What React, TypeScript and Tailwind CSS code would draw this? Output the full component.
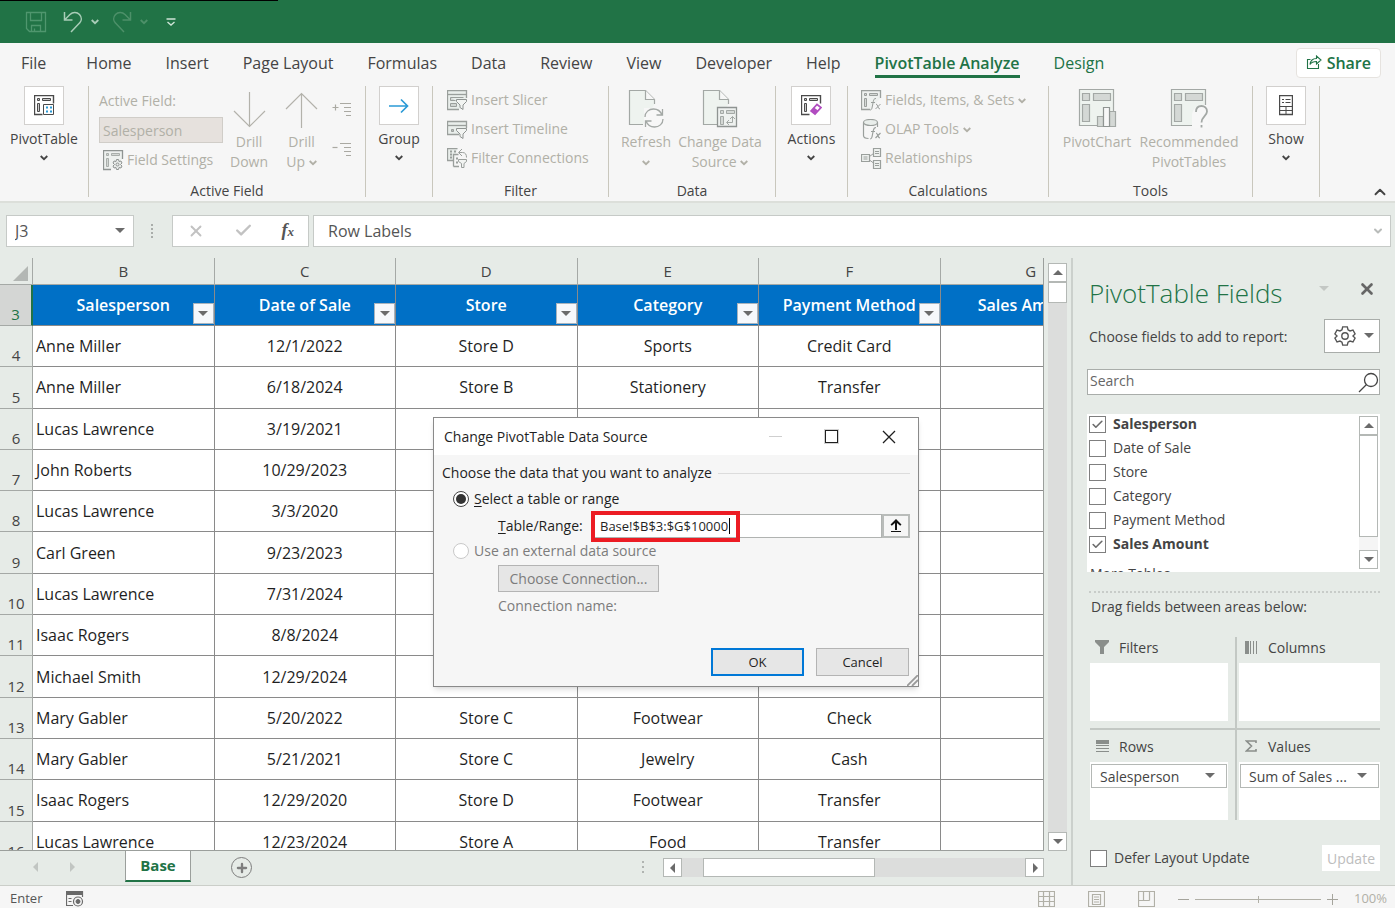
import type { ReactNode } from "react";
import { Check, ChevronDown, ChevronUp, Plus, X } from "lucide-react";

const TABS = [
  "File",
  "Home",
  "Insert",
  "Page Layout",
  "Formulas",
  "Data",
  "Review",
  "View",
  "Developer",
  "Help",
  "PivotTable Analyze",
  "Design",
];

const COLUMNS = [
  { letter: "B", title: "Salesperson" },
  { letter: "C", title: "Date of Sale" },
  { letter: "D", title: "Store" },
  { letter: "E", title: "Category" },
  { letter: "F", title: "Payment Method" },
  { letter: "G", title: "Sales Amount" },
];

const ROWS = [
  ["Anne Miller", "12/1/2022", "Store D", "Sports", "Credit Card"],
  ["Anne Miller", "6/18/2024", "Store B", "Stationery", "Transfer"],
  ["Lucas Lawrence", "3/19/2021", "", "", ""],
  ["John Roberts", "10/29/2023", "", "", ""],
  ["Lucas Lawrence", "3/3/2020", "", "", ""],
  ["Carl Green", "9/23/2023", "", "", ""],
  ["Lucas Lawrence", "7/31/2024", "", "", ""],
  ["Isaac Rogers", "8/8/2024", "", "", ""],
  ["Michael Smith", "12/29/2024", "", "", ""],
  ["Mary Gabler", "5/20/2022", "Store C", "Footwear", "Check"],
  ["Mary Gabler", "5/21/2021", "Store C", "Jewelry", "Cash"],
  ["Isaac Rogers", "12/29/2020", "Store D", "Footwear", "Transfer"],
  ["Lucas Lawrence", "12/23/2024", "Store A", "Food", "Transfer"],
];

const FIELDS = [
  { name: "Salesperson", checked: true },
  { name: "Date of Sale", checked: false },
  { name: "Store", checked: false },
  { name: "Category", checked: false },
  { name: "Payment Method", checked: false },
  { name: "Sales Amount", checked: true },
];

/* ---------- small shared pieces ---------- */

function Triangle({ dir = "down", className = "text-[#6b6b6b]" }: { dir?: "up" | "down" | "left" | "right"; className?: string }) {
  const paths = {
    down: "M0 2h10L5 7z",
    up: "M0 7h10L5 2z",
    left: "M7 0v10L2 5z",
    right: "M3 0v10l5-5z",
  };
  return (
    <svg width="10" height="10" viewBox="0 0 10 10" className={`shrink-0 ${className}`} fill="currentColor">
      <path d={paths[dir]} />
    </svg>
  );
}

function Caret() {
  return (
    <svg width="8" height="6" viewBox="0 0 8 6" fill="none" stroke="currentColor" strokeWidth="1.800" className="inline-block align-middle">
      <path d="M.700 1L4 4.200 7.300 1" />
    </svg>
  );
}

function ScrollButton({ dir, label }: { dir: "up" | "down" | "left" | "right"; label: string }) {
  return (
    <button aria-label={label} className="flex items-center justify-center w-[19px] h-[19px] shrink-0 bg-white border border-[#b4b8b5]">
      <Triangle dir={dir} />
    </button>
  );
}

/* ---------- ribbon icons ---------- */

function SaveIcon() {
  return (
    <svg width="22" height="22" viewBox="0 0 22 22" fill="none" stroke="#4f966e" strokeWidth="1.3">
      <path d="M1.5 1.5h19v19h-16l-3-3zM5.500 1.500v8h11v-8M6.500 20.500v-6h9v6M9.500 20.500v-3" />
    </svg>
  );
}

function UndoIcon({ flip = false }: { flip?: boolean }) {
  return (
    <svg width="20" height="22" viewBox="0 0 20 22" fill="none" stroke="currentColor" strokeWidth="1.5" className={flip ? "-scale-x-100" : ""}>
      <path d="M1.500 1v8h8M1.500 9l5.500-5.500c3-3 7-2.500 9.500 0 2.500 2.800 2.300 6.300 0 8.600L8 21" />
    </svg>
  );
}

function PivotIcon({ children, color = "#4a4a4a" }: { children?: ReactNode; color?: string }) {
  return (
    <svg width="21" height="21" viewBox="0 0 21 21" fill="none" stroke={color}>
      <path d="M8.500 19.500h-8v-19h19v8" strokeWidth="1.4" />
      <path d="M3.500 3.500h2v2h-2zM8.500 3.500h8v2h-8zM3.500 8.500h2v8h-2z" fill="#c9c9c9" />
      {children}
    </svg>
  );
}

function GearIcon() {
  return (
    <svg width="22" height="22" viewBox="0 0 24 24" fill="none" stroke="#555555" strokeWidth="1.500">
      <path d="M9.500 2h5l.8 3.200 2.200 1.300 3.200-1 2.300 4.200L20.700 12l2.300 2.300-2.300 4.200-3.200-1-2.200 1.300-.8 3.200h-5l-.8-3.200-2.200-1.300-3.200 1L1 14.300 3.300 12 1 9.700l2.300-4.200 3.200 1 2.200-1.300z" />
      <circle cx="12" cy="12" r="3.500" />
    </svg>
  );
}

function FieldSettingsIcon() {
  return (
    <svg width="21" height="21" viewBox="0 0 21 21" fill="none" stroke="#8f9492">
      <path d="M8 19.500H.500V.500h19V9" fill="#eef1ef" strokeWidth="1.3" />
      <path d="M3.500 3.500h2v2h-2zM8.500 3.500h8v2h-8zM3.500 8.500h2v8h-2z" fill="#d4d8d5" stroke="#a9aeab" />
      <path d="M13.500 9.500h2l.5 2 2-.5 1 2-1.500 1.500 1.500 1.500-1 2-2-.5-.5 2h-2l-.5-2-2 .5-1-2 1.500-1.500L10 13l1-2 2 .5z" fill="#e9ecea" />
      <circle cx="14.500" cy="14.500" r="1.500" />
    </svg>
  );
}

function FunnelOverlay() {
  return <path d="M9.500 9.500h10v2l-3.500 3.500v4.500l-3-2V15L9.500 11.500z" fill="#f2f4f2" stroke="#8f9492" />;
}

function SlicerIcon() {
  return (
    <svg width="21" height="21" viewBox="0 0 21 21" fill="none" stroke="#9a9f9c">
      <path d="M12 19.500H.500V.500h19V8" fill="#e9eeeb" strokeWidth="1.300" />
      <path d="M1 4.500h18" strokeWidth="1.300" />
      <path d="M3.500 7.500h13M3.500 7.500v3h5M3.500 13.500h6v3h-6z" fill="#d0d5d2" />
      <FunnelOverlay />
    </svg>
  );
}

function TimelineIcon() {
  return (
    <svg width="21" height="19" viewBox="0 1 21 19" fill="none" stroke="#9a9f9c">
      <path d="M12 15.500H.500V2.500h19V9" fill="#e9eeeb" strokeWidth="1.300" />
      <path d="M1 6.500h18" strokeWidth="1.300" />
      <path d="M4.500 10.500h2v2h-2z" fill="#b9bebb" />
      <FunnelOverlay />
    </svg>
  );
}

function FilterConnectionsIcon() {
  return (
    <svg width="21" height="21" viewBox="0 0 21 21" fill="none" stroke="#9a9f9c">
      <path d="M7 12.500H.500V.500h10" fill="#e9eeeb" strokeWidth="1.300" />
      <path d="M3 3.500h2M7 3.500h2M3 6.500h2M3 9.500h2" strokeWidth="2" />
      <path d="M6.500 18.500v-12h5M12 18.500H6.500" strokeWidth="1.300" />
      <path d="M9 10.500h2M9 14.500h2" strokeWidth="2" />
      <path d="M12 4.500h3.500c3 0 4 2 4 5M15 1l-3.500 3.500L15 8" />
      <path d="M11.500 11.500h8v2l-2.500 2v4h-2.500v-4l-3-2z" fill="#f2f4f2" />
    </svg>
  );
}

function PageShape() {
  return (
    <>
      <path d="M27.500 16v-4.500l-9-9h-16v34H16" fill="#eef3ef" stroke="#a3a8a5" strokeWidth="1.200" />
      <path d="M18.500 2.500v9h9" fill="#f7f7f7" stroke="#a3a8a5" strokeWidth="1.200" />
    </>
  );
}

function RefreshIcon() {
  return (
    <svg width="38" height="40" viewBox="0 0 38 40" fill="none" stroke="#a3a8a5" strokeWidth="1.300">
      <PageShape />
      <rect x="17" y="20" width="20" height="20" fill="#f7f7f7" stroke="none" />
      <path d="M18 29c0-5 4-8 8.500-8 4 0 7 2 8.500 6M35.500 21v6h-6M36 31c0 5-4 8-8.500 8-4 0-7-2-8.500-6M18.500 39v-6h6" />
    </svg>
  );
}

function ChangeSourceIcon() {
  return (
    <svg width="38" height="40" viewBox="0 0 38 40" fill="none" stroke="#a3a8a5" strokeWidth="1.300">
      <PageShape />
      <path d="M16.500 19.500h19v19h-19z" fill="#eef1ef" stroke="#8f9492" />
      <path d="M19.500 22.500h3v3h-3zM25.500 22.500h8v3h-8zM19.500 28.500h3v8h-3z" fill="#d4d8d5" strokeWidth="1" />
      <path d="M26 34.500h5.500v-6M28 32l-2.500 2.500L28 37M29 31l2.500-2.500L34 31" strokeWidth="1" />
    </svg>
  );
}

function BigPivot({ children }: { children: ReactNode }) {
  return (
    <svg width="40" height="40" viewBox="0 0 40 40" fill="none" stroke="#a3a8a5" strokeWidth="1.200">
      <path d="M2.500 1.500h34v36h-34z" fill="#eef3ef" />
      <path d="M5.500 5.500h7v7h-7zM16.500 5.500h17v7h-17zM5.500 16.500h7v17h-7z" fill="#d4d8d5" />
      {children}
    </svg>
  );
}

function FxTableIcon() {
  return (
    <svg width="21" height="21" viewBox="0 0 21 21" fill="none" stroke="#9a9f9c">
      <path d="M9 19.500H.500V.500h19V8" fill="#eef1ef" strokeWidth="1.300" />
      <path d="M3.500 3.500h2v2h-2zM8.500 3.500h8v2h-8zM3.500 8.500h2v8h-2z" fill="#d4d8d5" />
      <path d="M15 8.500c-2 0-2.300 1-2.700 3L11 18c-.3 1.500-1 2-2 2M10 12.500h4M15 14c2 0 1.500 5 4 5M19.500 14l-5 5" />
    </svg>
  );
}

function OlapIcon() {
  return (
    <svg width="21" height="21" viewBox="0 0 21 21" fill="none" stroke="#9a9f9c" strokeWidth="1.200">
      <path d="M2.500 3.500v13c0 2 2 3 5 3M16.500 3.500V8" />
      <ellipse cx="9.500" cy="3.500" rx="7" ry="3" fill="#e9eeeb" />
      <path d="M15 8.500c-2 0-2.300 1-2.700 3L11 18c-.3 1.500-1 2-2 2M10 12.500h4M15 14c2 0 1.500 5 4 5M19.500 14l-5 5" />
    </svg>
  );
}

function RelationshipsIcon() {
  return (
    <svg width="21" height="21" viewBox="0 0 21 21" fill="none" stroke="#9a9f9c" strokeWidth="1.200">
      <path d="M.500 6.500h8v7h-8zM12.500.500h7v8h-7zM12.500 12.500h7v8h-7z" fill="#eef1ef" />
      <path d="M2.500 9h4M2.500 11h4M14 3.500h4M14 5.500h4M14 15.500h4M14 17.500h4M8.500 8.500l4-3M8.500 12l4 3" strokeWidth="1" />
    </svg>
  );
}

function ExpandIcon({ plus = false }: { plus?: boolean }) {
  return (
    <svg width="20" height="16" viewBox="0 0 20 16" fill="none" stroke="#aaa9a2" strokeWidth="1.200">
      <path d={plus ? "M.500 5.500h6M3.500 2.500v6" : "M.500 5.500h5"} />
      <path d="M8 1.500h11M12 5.500h7M12 9.500h7M14 13.500h5" />
    </svg>
  );
}

function DrillArrow({ up = false }: { up?: boolean }) {
  return (
    <svg width="33" height="36" viewBox="0 0 33 36" fill="none" stroke="#b3b2ab" strokeWidth="1.200" className={up ? "rotate-180" : ""}>
      <path d="M16.500 0v34.500M1 19l15.500 15.500L32 19" />
    </svg>
  );
}

/* ---------- ribbon ---------- */

function RibbonGroup({ label, className, children }: { label?: string; className: string; children: ReactNode }) {
  return (
    <section className={`flex flex-col shrink-0 h-[111px] border-r border-[#c9c7bd] ${className}`}>
      <div className="flex flex-1 justify-center">{children}</div>
      {label && <h2 className="text-center text-[14px] leading-3 text-[#444444]">{label}</h2>}
    </section>
  );
}

function BoxedButton({ label, children }: { label: string; children: ReactNode }) {
  return (
    <button className="flex flex-col items-center text-[#444444]">
      <span className="flex items-center justify-center w-10 h-[39px] bg-white border border-[#d2d0ce]">{children}</span>
      <span className="mt-1 leading-5">{label}</span>
      <span className="leading-4">
        <Caret />
      </span>
    </button>
  );
}

function SmallCommand({ icon, label, caret = false }: { icon: ReactNode; label: string; caret?: boolean }) {
  return (
    <button disabled className="flex items-center gap-[3px] h-7 whitespace-nowrap leading-5 text-[#b1b0a7]">
      <span className="flex justify-center w-[21px]">{icon}</span>
      <span>
        {label} {caret && <Caret />}
      </span>
    </button>
  );
}

function BigCommand({ icon, lines, caret = false, className = "" }: { icon: ReactNode; lines: string[]; caret?: boolean; className?: string }) {
  return (
    <button disabled className={`flex flex-col items-center whitespace-nowrap text-[#b1b0a7] ${className}`}>
      <span className="flex items-end h-[42px] mb-1">{icon}</span>
      {lines.map((line, i) => (
        <span key={i} className="h-5 leading-5">
          {line} {caret && i === lines.length - 1 && <Caret />}
        </span>
      ))}
    </button>
  );
}

function Ribbon() {
  return (
    <div className="relative flex h-[117px] text-[14px] bg-[#f6f6f6] border-b-2 border-[#dcdfda]">
      <RibbonGroup className="w-[89px]">
        <BoxedButton label="PivotTable">
          <PivotIcon>
            <path d="M9.500 9.500h10v10h-10z" fill="#fff" />
            <path d="M12 12.500h2M16 12.500h2M12 16.500h2M16 16.500h2" stroke="#2b9ad6" strokeWidth="2" />
          </PivotIcon>
        </BoxedButton>
      </RibbonGroup>

      <RibbonGroup label="Active Field" className="w-[277px]">
        <div className="flex flex-1 pl-[10px] text-[#b1b0a7]">
          <div className="flex flex-col w-[124px]">
            <label htmlFor="active-field" className="mt-1 h-[27px] leading-[22px]">
              Active Field:
            </label>
            <input
              id="active-field"
              disabled
              defaultValue="Salesperson"
              className="w-full h-[26px] px-[3px] bg-[#e6e1dd] border border-[#d0cdc8]"
            />
            <button disabled className="flex items-center gap-[3px] mt-[6px] pl-1 leading-[22px] whitespace-nowrap">
              <FieldSettingsIcon />
              Field Settings
            </button>
          </div>
          <BigCommand className="w-[52px]" icon={<DrillArrow />} lines={["Drill", "Down"]} />
          <BigCommand className="w-[53px]" icon={<DrillArrow up />} lines={["Drill", "Up"]} caret />
          <div className="flex flex-col gap-6 pt-4 pl-1">
            <button disabled aria-label="Expand Field">
              <ExpandIcon plus />
            </button>
            <button disabled aria-label="Collapse Field">
              <ExpandIcon />
            </button>
          </div>
        </div>
      </RibbonGroup>

      <RibbonGroup className="w-[67px]">
        <BoxedButton label="Group">
          <svg width="20" height="16" viewBox="0 0 20 16" fill="none" stroke="#2b9ad6" strokeWidth="1.700">
            <path d="M0 8h18.500M12 1.500L18.500 8 12 14.500" />
          </svg>
        </BoxedButton>
      </RibbonGroup>

      <RibbonGroup label="Filter" className="w-[176px]">
        <div className="flex flex-1 flex-col items-start gap-px pl-[14px]">
          <SmallCommand icon={<SlicerIcon />} label="Insert Slicer" />
          <SmallCommand icon={<TimelineIcon />} label="Insert Timeline" />
          <SmallCommand icon={<FilterConnectionsIcon />} label="Filter Connections" />
        </div>
      </RibbonGroup>

      <RibbonGroup label="Data" className="w-[167px]">
        <div className="flex flex-1">
          <BigCommand className="w-[74px]" icon={<RefreshIcon />} lines={["Refresh", ""]} caret />
          <BigCommand className="w-[74px]" icon={<ChangeSourceIcon />} lines={["Change Data", "Source"]} caret />
        </div>
      </RibbonGroup>

      <RibbonGroup className="w-[72px]">
        <BoxedButton label="Actions">
          <PivotIcon>
            <path d="M10 16l6-6.500 4 3-6 6.500z" fill="#fff" stroke="#b14cc0" strokeWidth="1.700" />
            <path d="M10 16l3-3.500 4 3-3 3.500z" fill="#b14cc0" stroke="none" />
          </PivotIcon>
        </BoxedButton>
      </RibbonGroup>

      <RibbonGroup label="Calculations" className="w-[201px]">
        <div className="flex flex-1 flex-col items-start gap-px pl-[13px]">
          <SmallCommand icon={<FxTableIcon />} label="Fields, Items, & Sets" caret />
          <SmallCommand icon={<OlapIcon />} label="OLAP Tools" caret />
          <SmallCommand icon={<RelationshipsIcon />} label="Relationships" />
        </div>
      </RibbonGroup>

      <RibbonGroup label="Tools" className="w-[204px]">
        <div className="flex flex-1 pl-[2px]">
          <BigCommand
            className="w-[92px]"
            icon={
              <BigPivot>
                <path d="M20.500 28.500h6v10h-6zM32.500 23.500h6v15h-6z" fill="#d4d8d5" />
                <path d="M26.500 19.500h6v19h-6z" fill="#f7f7f7" stroke="#8f9492" />
              </BigPivot>
            }
            lines={["PivotChart"]}
          />
          <BigCommand
            className="w-[92px]"
            icon={
              <BigPivot>
                <path d="M23 40V26c2-7 6-9 10-9h6v23z" fill="#f7f7f7" stroke="none" />
                <path d="M27 24c0-4 2.500-6 5.500-6s5.500 2 5.500 5.500c0 4.500-5.500 5-5.500 11M32.500 37v2.500" strokeWidth="1.800" />
              </BigPivot>
            }
            lines={["Recommended", "PivotTables"]}
          />
        </div>
      </RibbonGroup>

      <RibbonGroup className="w-[67px]">
        <BoxedButton label="Show">
          <svg width="14" height="21" viewBox="0 0 14 21" fill="none" stroke="#4a4a4a">
            <path d="M.500.500h13v19H.500z" strokeWidth="1.400" />
            <path d="M3 4.500h2M6.500 4.500h5M3 7.500h2M6.500 7.500h5M1 11.500h12M1 15.500h12M7 11.500v8" />
          </svg>
        </BoxedButton>
      </RibbonGroup>

      <button aria-label="Collapse the Ribbon" className="absolute right-[6px] bottom-0 text-[#444444]">
        <ChevronUp className="w-[18px] h-[18px]" strokeWidth={2.500} />
      </button>
    </div>
  );
}

function Header() {
  return (
    <header>
      <div className="h-[43px] bg-[#217346]">
        <div className="h-px w-[278px] bg-black" />
        <div className="flex items-center pl-[25px] h-[42px] text-[#a9cdb8]">
          <button disabled aria-label="Save">
            <SaveIcon />
          </button>
          <button aria-label="Undo" className="flex items-center gap-2 ml-4">
            <UndoIcon />
            <Caret />
          </button>
          <button disabled aria-label="Redo" className="flex items-center gap-2 ml-[13px] text-[#4d9069]">
            <UndoIcon flip />
            <Caret />
          </button>
          <button aria-label="Customize Quick Access Toolbar" className="ml-[18px]">
            <svg width="10" height="9" viewBox="0 0 10 9" fill="none" stroke="#cfe4d7" strokeWidth="1.400">
              <path d="M.500 1h9M1.500 4l3.500 3 3.500-3" />
            </svg>
          </button>
        </div>
      </div>
      <nav className="flex items-center h-[43px] pb-1 pl-[21px] pr-[14px] bg-[#f6f6f6] text-[16px] text-[#444444]">
        <div className="flex flex-1 items-center gap-[34px]">
          {TABS.map((tab) => {
            if (tab === "PivotTable Analyze") {
              return (
                <button key={tab} className="leading-6 font-semibold text-[#217346] border-y-[3px] border-t-transparent border-b-[#217346] whitespace-nowrap">
                  {tab}
                </button>
              );
            }
            return (
              <button key={tab} className={`leading-6 whitespace-nowrap ${tab === "Design" ? "text-[#217346]" : ""} ${tab === "File" ? "mr-[6px]" : ""}`}>
                {tab}
              </button>
            );
          })}
        </div>
        <button className="flex items-center gap-[5px] h-[30px] px-[9px] rounded-sm bg-white border border-[#e6e3df] font-semibold text-[#217346]">
          <svg width="16" height="15" viewBox="0 0 16 15" fill="none" stroke="currentColor" strokeWidth="1.100">
            <path d="M4.500 4.500h-3v9h11V9M4 9.500c.5-4 3-6 6.500-6V1L15 5l-4.500 4V6.500C8 6.500 5.500 7 4 9.500z" />
          </svg>
          Share
        </button>
      </nav>
      <Ribbon />
    </header>
  );
}

/* ---------- formula bar ---------- */

function FormulaBar() {
  return (
    <div className="flex items-center h-[55px] pl-[6px] pr-1 text-[16px] text-[#555555]">
      <div className="flex items-center w-32 h-8 pr-2 bg-white border border-[#c6cac7]">
        <input aria-label="Name Box" defaultValue="J3" className="flex-1 min-w-0 h-full pl-2 outline-none" />
        <button aria-label="Name Box list">
          <Triangle />
        </button>
      </div>
      <svg width="3" height="14" viewBox="0 0 3 14" fill="#a9adaa" className="ml-[17px] mr-[18px]">
        <path d="M0 0h2v2H0zM0 4h2v2H0zM0 8h2v2H0zM0 12h2v2H0z" />
      </svg>
      <div className="flex items-center justify-between w-[137px] h-8 px-[14px] bg-white border border-[#c6cac7]">
        <button aria-label="Cancel entry" className="text-[#c2c2c2]">
          <X className="w-[18px] h-[18px]" strokeWidth={2.500} />
        </button>
        <button aria-label="Enter entry" className="text-[#c2c2c2]">
          <Check className="w-[19px] h-[19px]" strokeWidth={3} />
        </button>
        <button aria-label="Insert Function" className="font-['Liberation_Serif',serif] italic font-bold text-[18px] leading-5">
          f<span className="text-[13px]">x</span>
        </button>
      </div>
      <div className="flex items-center flex-1 h-8 ml-1 pr-[6px] bg-white border border-[#c6cac7]">
        <input aria-label="Formula Bar" defaultValue="Row Labels" className="flex-1 h-full pl-[14px] outline-none" />
        <button aria-label="Expand Formula Bar" className="text-[#b9bcba]">
          <ChevronDown className="w-3 h-3" strokeWidth={4} />
        </button>
      </div>
    </div>
  );
}

/* ---------- worksheet ---------- */

function SheetGrid() {
  return (
    <div className="flex-1 min-h-0 overflow-hidden border-r border-b border-[#9b9f9c]">
      <table className="table-fixed w-[1122px] h-[605px] border-separate border-spacing-0 text-[16px] text-[#1f1f1f]">
        <colgroup>
          <col className="w-[33px]" />
        </colgroup>
        <thead className="bg-[#e6ebe7]">
          <tr className="h-[27px]">
            <th className="border-r border-b border-[#a5a9a6] p-0">
              <svg width="15" height="15" viewBox="0 0 15 15" className="ml-[13px] mt-1" fill="#b3b7b4">
                <path d="M15 0v15H0z" />
              </svg>
            </th>
            {COLUMNS.map((col) => (
              <th key={col.letter} className="p-0 border-r border-b border-[#a5a9a6] text-[15px] leading-6 font-normal text-[#444444]">
                {col.letter}
              </th>
            ))}
          </tr>
        </thead>
        <tbody>
          <tr className="h-[41px]">
            <th className="p-0 border-r-2 border-b border-r-[#217346] border-b-[#a5a9a6] bg-[#d4d6d4] align-bottom text-[15px] leading-[22px] font-normal text-[#217346]">
              3
            </th>
            {COLUMNS.map((col) => (
              <td key={col.letter} className="relative p-0 bg-[#0070c6] border-r border-b border-[#8a8a8a] text-center font-semibold text-white whitespace-nowrap">
                {col.title}
                <button
                  aria-label={`Filter ${col.title}`}
                  className="absolute right-0 bottom-px flex items-center justify-center w-[21px] h-[21px] bg-[#f6f8fb] border border-[#a8b3bd]"
                >
                  <Triangle />
                </button>
              </td>
            ))}
          </tr>
          {ROWS.map((row, i) => (
            <tr key={i} className="bg-white">
              <th className="p-0 bg-[#e6ebe7] border-r border-b border-[#a5a9a6] align-bottom text-[15px] leading-[22px] font-normal text-[#444444]">
                {i + 4}
              </th>
              {row.map((value, j) => (
                <td key={j} className={`p-0 border-r border-b border-[#8a8a8a] whitespace-nowrap ${j === 0 ? "pl-[3px]" : "text-center"}`}>
                  {value}
                </td>
              ))}
              <td className="border-r border-b border-[#8a8a8a]" />
            </tr>
          ))}
        </tbody>
      </table>
    </div>
  );
}

function SheetTabs() {
  return (
    <div className="flex items-start h-[34px]">
      <div className="flex gap-[26px] w-[125px] pt-[11px] pl-[31px]">
        <button aria-label="Previous sheet">
          <Triangle dir="left" className="text-[#c1c5c2]" />
        </button>
        <button aria-label="Next sheet">
          <Triangle dir="right" className="text-[#c1c5c2]" />
        </button>
      </div>
      <button className="w-[66px] h-[31px] bg-white border-x border-b-2 border-x-[#9b9f9c] border-b-[#217346] text-[15px] font-bold text-[#217346]">
        Base
      </button>
      <button aria-label="New sheet" className="flex items-center justify-center w-[21px] h-[21px] mt-[6px] ml-10 rounded-full border border-[#7d7d7d] text-[#7d7d7d]">
        <Plus className="w-[14px] h-[14px]" strokeWidth={4} />
      </button>
      <div className="flex flex-1 items-center justify-end pt-[7px]">
        <svg width="2" height="14" viewBox="0 0 2 14" fill="#b0b4b1" className="mr-[19px]">
          <path d="M0 0h2v2H0zM0 5h2v2H0zM0 10h2v2H0z" />
        </svg>
        <ScrollButton dir="left" label="Scroll left" />
        <div className="w-[343px] h-[19px] pl-[21px] bg-[#dcdddc]">
          <div className="w-[172px] h-full bg-white border border-[#b4b8b5]" />
        </div>
        <ScrollButton dir="right" label="Scroll right" />
      </div>
    </div>
  );
}

/* ---------- PivotTable Fields pane ---------- */

function CheckBox({ label, checked = false, bold = false }: { label: string; checked?: boolean; bold?: boolean }) {
  return (
    <label className={`flex items-center gap-[7px] text-[14px] leading-6 text-[#444444] ${bold ? "font-bold" : ""}`}>
      <span className="grid">
        <input type="checkbox" defaultChecked={checked} className="peer [grid-area:1/1] appearance-none w-[17px] h-[17px] bg-white border border-[#7f7f7f]" />
        <Check className="hidden peer-checked:block pointer-events-none [grid-area:1/1] place-self-center w-[13px] h-[13px] text-[#6b6b6b]" strokeWidth={3} />
      </span>
      {label}
    </label>
  );
}

function Area({ title, icon, item }: { title: string; icon: ReactNode; item?: string }) {
  return (
    <section>
      <h3 className="flex items-start gap-[10px] h-[26px] pl-[5px] leading-[22px]">
        <span className="flex items-center justify-center w-[14px] h-5">{icon}</span>
        {title}
      </h3>
      <div className="h-[58px] px-[1px] pt-[2px] bg-white">
        {item && (
          <button className="flex items-center justify-between w-full h-6 pl-2 pr-[11px] border border-[#b4b8b5] bg-white whitespace-nowrap">
            {item}
            <Triangle />
          </button>
        )}
      </div>
    </section>
  );
}

function FieldsPane() {
  return (
    <aside className="flex flex-col shrink-0 w-[324px] pt-3 pl-[14px] pr-[15px] border-l-2 border-[#cbd0cc] text-[14px] text-[#444444]">
      <div className="flex items-center h-[46px] pl-[2px]">
        <h2 className="flex-1 text-[26px] leading-8 font-light text-[#217346] whitespace-nowrap">PivotTable Fields</h2>
        <button aria-label="Task Pane Options" className="mb-2 mr-[29px]">
          <Triangle className="text-[#c3c7c4]" />
        </button>
        <button aria-label="Close" className="mb-2 mr-1">
          <X className="w-[18px] h-[18px] text-[#666666]" strokeWidth={3.500} />
        </button>
      </div>
      <div className="flex items-center justify-between mt-[3px] pl-[2px] h-[34px]">
        Choose fields to add to report:
        <button aria-label="Tools" className="flex items-center gap-2 h-[34px] pl-[9px] pr-[5px] bg-white border border-[#a9adaa]">
          <GearIcon />
          <Triangle />
        </button>
      </div>
      <div className="flex items-center h-[26px] mt-4 bg-white border border-[#a9adaa]">
        <input aria-label="Search fields" placeholder="Search" className="flex-1 min-w-0 pb-[3px] pl-[2px] leading-5 outline-none placeholder:text-[#666666]" />
        <svg width="21" height="21" viewBox="0 0 21 21" fill="none" stroke="#444444" strokeWidth="1.300">
          <circle cx="13" cy="8" r="6.500" />
          <path d="M8.500 12.500L1 20" />
        </svg>
      </div>

      <div className="flex h-[158px] mt-[19px] bg-white overflow-hidden">
        <div className="flex-1 pl-[2px] -mt-[2px]">
          {FIELDS.map((field) => (
            <CheckBox key={field.name} label={field.name} checked={field.checked} bold={field.checked} />
          ))}
          <p className="pt-2 pl-[1px] leading-5">More Tables...</p>
        </div>
        <div className="flex flex-col w-[21px] pt-[2px] pb-[3px] pr-[2px]">
          <ScrollButton dir="up" label="Scroll fields up" />
          <div className="h-[102px] bg-white border border-[#b4b8b5]" />
          <div className="flex-1 bg-[#f5f5f5]" />
          <ScrollButton dir="down" label="Scroll fields down" />
        </div>
      </div>

      <p className="mt-[19px] ml-[2px] pt-1 pl-[2px] border-t-2 border-dotted border-[#c8ccc9] leading-5">Drag fields between areas below:</p>

      <div className="grid grid-cols-[145px_1fr] mt-5 ml-[3px]">
        <div className="pb-[7px] pr-[7px] border-b-2 border-[#c3c8c4]">
          <Area
            title="Filters"
            icon={
              <svg width="14" height="14" viewBox="0 0 14 14" fill="#8a8e8b">
                <path d="M0 0h14v2L9 7v7H5V7L0 2z" />
              </svg>
            }
          />
        </div>
        <div className="pb-[7px] pl-[2px] border-l-2 border-b-2 border-[#c3c8c4]">
          <Area
            title="Columns"
            icon={
              <svg width="12" height="13" viewBox="0 0 12 13" fill="#8a8e8b">
                <path d="M0 0h4v13H0zM5 0h1v13H5zM8 0h1v13H8zM11 0h1v13h-1z" />
              </svg>
            }
          />
        </div>
        <div className="pt-[6px] pr-[7px]">
          <Area
            title="Rows"
            item="Salesperson"
            icon={
              <svg width="13" height="12" viewBox="0 0 13 12" fill="#8a8e8b">
                <path d="M0 0h13v4H0zM0 5h13v1H0zM0 8h13v1H0zM0 11h13v1H0z" />
              </svg>
            }
          />
        </div>
        <div className="pt-[6px] pl-[2px] border-l-2 border-[#c3c8c4]">
          <Area
            title="Values"
            item="Sum of Sales ..."
            icon={
              <svg width="12" height="12" viewBox="0 0 12 12" fill="none" stroke="#8a8e8b" strokeWidth="1.600">
                <path d="M11 3V1H1.500l5 5-5 5H11V9" />
              </svg>
            }
          />
        </div>
      </div>

      <div className="flex items-center justify-between mt-[25px] pl-[3px]">
        <CheckBox label="Defer Layout Update" />
        <button disabled className="h-[26px] px-[5px] bg-white text-[#bdbdbd]">
          Update
        </button>
      </div>
    </aside>
  );
}

/* ---------- dialog ---------- */

function RadioDot({ id, checked = false, disabled = false }: { id: string; checked?: boolean; disabled?: boolean }) {
  return (
    <span className="grid">
      <input
        id={id}
        type="radio"
        name="source"
        defaultChecked={checked}
        disabled={disabled}
        className="peer [grid-area:1/1] appearance-none w-4 h-4 rounded-full bg-white border border-[#444444] disabled:border-[#c9c9c9]"
      />
      <span className="hidden peer-checked:block pointer-events-none [grid-area:1/1] place-self-center w-[10px] h-[10px] rounded-full bg-[#333333]" />
    </span>
  );
}

function DataSourceDialog() {
  return (
    <div
      role="dialog"
      aria-labelledby="dialog-title"
      className="absolute left-[433px] top-[417px] flex flex-col w-[486px] h-[270px] bg-[#f6f6f6] border border-[#8a8a8a] text-[14px] leading-[18px] text-[#1f1f1f] shadow-md"
    >
      <div className="flex items-center h-[37px] pl-[10px] pr-[22px] bg-white">
        <h2 id="dialog-title" className="flex-1">
          Change PivotTable Data Source
        </h2>
        <button disabled aria-label="Minimize" className="w-[13px] h-px bg-[#cfcfcf]" />
        <button aria-label="Maximize" className="w-[13px] h-[13px] ml-[43px] mr-11 border border-[#1f1f1f] outline-1 outline-[#1f1f1f]/20" />
        <button aria-label="Close">
          <svg width="14" height="14" viewBox="0 0 14 14" stroke="#1f1f1f" strokeWidth="1.300">
            <path d="M1 1l12 12M13 1L1 13" />
          </svg>
        </button>
      </div>

      <div className="flex flex-col flex-1 pt-[9px] pl-2 pr-2">
        <div className="flex items-center gap-[6px]">
          Choose the data that you want to analyze
          <span className="flex-1 h-px bg-[#dcdcdc]" />
        </div>
        <div className="flex items-center gap-[5px] mt-2 pl-[11px]">
          <RadioDot id="src-range" checked />
          <label htmlFor="src-range">
            <u className="underline-offset-2">S</u>elect a table or range
          </label>
        </div>
        <div className="flex items-center mt-[6px] pl-14 h-6">
          <label htmlFor="range" className="w-[95px]">
            <u className="underline-offset-2">T</u>able/Range:
          </label>
          <div className="relative flex flex-1">
            <input id="range" defaultValue="Base!$B$3:$G$10000" className="flex-1 min-w-0 h-6 pl-[6px] bg-white border border-[#b0b3b1] text-[13px] outline-none" />
            <button aria-label="Collapse Dialog" className="flex items-center justify-center w-7 h-6 border-2 border-[#b9bcba] bg-[#f6f6f6]">
              <svg width="12" height="14" viewBox="0 0 12 14" fill="#111111">
                <path d="M6 0l5.500 5.500-1.300 1.300L7 4v7H5V4L1.800 6.800.500 5.500zM1 12h10v1H1z" />
              </svg>
            </button>
            <span className="absolute -left-[2px] -top-[3px] w-[149px] h-[31px] border-4 border-[#ec1c24] pointer-events-none" />
            <span className="absolute left-[136px] top-1 w-px h-4 bg-black" />
          </div>
        </div>
        <div className="flex items-center gap-[5px] mt-1 pl-[11px] text-[#7c7c7c]">
          <RadioDot id="src-external" disabled />
          <label htmlFor="src-external">Use an external data source</label>
        </div>
        <button disabled className="w-[161px] h-[27px] mt-[5px] ml-14 bg-[#e6e6e6] border border-[#b4b4b4] text-[#7c7c7c]">
          Choose Connection...
        </button>
        <p className="mt-[5px] ml-14 text-[#7c7c7c]">Connection name:</p>
        <div className="flex justify-end gap-3 mt-auto pb-[10px] pr-[1px]">
          <button className="w-[93px] h-7 bg-[#e6e6e6] border-2 border-[#0078d7] text-[13px]">OK</button>
          <button className="w-[93px] h-7 bg-[#e6e6e6] border border-[#b4b4b4] text-[13px]">Cancel</button>
        </div>
      </div>
      <svg width="11" height="11" viewBox="0 0 11 11" stroke="#9a9a9a" strokeWidth="1.800" className="absolute right-0 bottom-0">
        <path d="M0 11L11 0M5 11l6-6" />
      </svg>
    </div>
  );
}

/* ---------- status bar ---------- */

function StatusBar() {
  return (
    <footer className="flex items-center shrink-0 h-[23px] pl-[10px] pr-2 pt-1 bg-[#f6f6f6] border-t border-[#cbcec9] text-[13px] text-[#555555]">
      <span>Enter</span>
      <button aria-label="Record Macro" className="ml-[24px]">
        <svg width="18" height="16" viewBox="0 0 18 16" fill="none" stroke="#6a6a6a">
          <path d="M7 14.500H.500V.500h16V6" strokeWidth="1.200" />
          <path d="M1 2.500h15" strokeWidth="3" />
          <path d="M2.500 7.500h3M2.500 10.500h3" />
          <circle cx="12" cy="10.500" r="4.500" fill="#f6f6f6" strokeWidth="1.200" />
          <circle cx="12" cy="10.500" r="2" fill="#6a6a6a" />
        </svg>
      </button>
      <div className="flex flex-1 items-center justify-end text-[#b1b0a7]">
        <button aria-label="Normal view" className="mr-[33px]">
          <svg width="17" height="16" viewBox="0 0 17 16" fill="none" stroke="currentColor" strokeWidth="1.200">
            <path d="M.500.500h16v15H.500zM.500 5.500h16M.500 10.500h16M5.500.500v15M11.500.500v15" />
          </svg>
        </button>
        <button aria-label="Page Layout view" className="mr-[33px]">
          <svg width="17" height="16" viewBox="0 0 17 16" fill="none" stroke="currentColor" strokeWidth="1.200">
            <path d="M.500.500h16v15H.500zM4.500 3.500h8v10h-8zM6 6h5M6 8.500h5M6 11h5" />
          </svg>
        </button>
        <button aria-label="Page Break Preview" className="mr-[23px]">
          <svg width="17" height="16" viewBox="0 0 17 16" fill="none" stroke="currentColor" strokeWidth="1.200">
            <path d="M.500.500h16v15H.500zM5.500.500v9M11.500.500v9M.500 9.500h11" />
          </svg>
        </button>
        <button aria-label="Zoom out" className="w-[11px] h-px bg-[#a5a49c]" />
        <svg width="126" height="8" viewBox="0 0 126 8" stroke="currentColor" className="mx-[6px]">
          <path d="M0 4.500h126M63.500 1v7" />
        </svg>
        <button aria-label="Zoom in">
          <svg width="11" height="11" viewBox="0 0 11 11" stroke="#a5a49c">
            <path d="M0 5.500h11M5.500 0v11" />
          </svg>
        </button>
        <span className="ml-4">100%</span>
      </div>
    </footer>
  );
}

export default function App() {
  return (
    <div className="relative flex flex-col h-screen overflow-hidden bg-[#e6ebe7] font-['Open_Sans','Noto_Sans',sans-serif]">
      <Header />
      <FormulaBar />
      <main className="flex flex-1 min-h-0">
        <div className="flex flex-col flex-1 min-w-0">
          <SheetGrid />
          <SheetTabs />
        </div>
        <div className="flex flex-col w-[27px] pt-[5px] pl-1 pb-[34px]">
          <ScrollButton dir="up" label="Scroll up" />
          <div className="flex-1 w-[19px] bg-[#dcdddc]">
            <div className="h-[21px] bg-white border border-[#b4b8b5]" />
          </div>
          <ScrollButton dir="down" label="Scroll down" />
        </div>
        <FieldsPane />
      </main>
      <StatusBar />
      <DataSourceDialog />
    </div>
  );
}
